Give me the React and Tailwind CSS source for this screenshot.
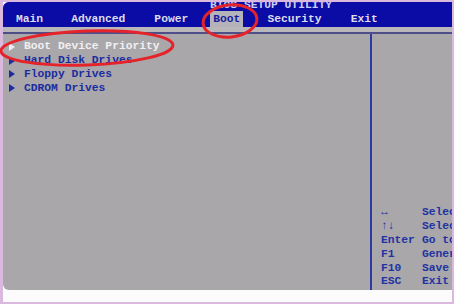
import React from "react";

const mono = { fontFamily: '"Liberation Mono", "DejaVu Sans Mono", monospace' };

function Tri({ color }) {
  return (
    <svg width="6" height="8" viewBox="0 0 6 8" className="shrink-0">
      <polygon points="0,0 6,4 0,8" fill={color} />
    </svg>
  );
}

export default function App() {
  const items = [
    { t: "Boot Device Priority", sel: true },
    { t: "Hard Disk Drives" },
    { t: "Floppy Drives" },
    { t: "CDROM Drives" },
  ];
  const help = [
    ["↔", "Select Screen"],
    ["↑↓", "Select Item"],
    ["Enter", "Go to Sub Screen"],
    ["F1", "General Help"],
    ["F10", "Save and Exit"],
    ["ESC", "Exit"],
  ];
  return (
    <div
      className="relative w-[454px] h-[304px] bg-[#dbb8de] pl-[3px] pr-[2px] pt-[2px] pb-[2px] overflow-hidden font-bold text-[11.3px]"
      style={mono}
    >
      <div className="flex flex-col h-full bg-[#fbfbfb]">
        <div className="flex-1 flex flex-col rounded-tl-[6px] rounded-bl-[6px] overflow-hidden bg-[#a9a7a9]">
          <div className="bg-[#0b0ba6] h-[25px] flex flex-col">
            <div className="h-[8px] overflow-hidden flex items-end pl-[207px]">
              <span className="text-[#c9cdf5] leading-[10px] whitespace-pre">BIOS SETUP UTILITY</span>
            </div>
            <div className="flex-1 flex items-end text-[#dcdcea] leading-[17px]">
              <span className="ml-[13px] h-[16px]">Main</span>
              <span className="ml-[28px] h-[16px]">Advanced</span>
              <span className="ml-[29px] h-[16px]">Power</span>
              <span className="ml-[22px] h-[16px] px-[3px] bg-[#b4b3ba] text-[#1a1a9c]">Boot</span>
              <span className="ml-[24px] h-[16px]">Security</span>
              <span className="ml-[29px] h-[16px]">Exit</span>
            </div>
          </div>
          <div className="h-[5px] bg-[#b9b7ba]" />
          <div className="h-[2px] bg-[#4e4e88]" />
          <div className="flex-1 flex min-h-0">
            <div className="w-[367px] pt-[6px] flex flex-col">
              {items.map((it) => (
                <div key={it.t} className="flex items-center h-[13.8px] pl-[6px]">
                  <Tri color={it.sel ? "#ececf0" : "#1c2ca0"} />
                  <span
                    className={`ml-[9px] whitespace-pre ${it.sel ? "text-[#f0f0f2]" : "text-[#1c2ca0]"}`}
                  >
                    {it.t}
                  </span>
                </div>
              ))}
            </div>
            <div className="w-[2px] bg-[#2c3aa6]" />
            <div className="flex-1 overflow-hidden pt-[172px] pl-[9px] text-[#2232a2]">
              {help.map(([k, d]) => (
                <div key={k} className="flex h-[13.8px] items-center whitespace-pre">
                  <span className="w-[41px] shrink-0">{k}</span>
                  <span>{d}</span>
                </div>
              ))}
            </div>
          </div>
        </div>
        <div className="h-[12px]" />
      </div>
      <svg className="absolute inset-0 pointer-events-none" width="454" height="304">
        <ellipse cx="87" cy="48" rx="86" ry="17" fill="none" stroke="#e4232b" strokeWidth="3" transform="rotate(-2 87 48)" />
        <ellipse cx="230" cy="21" rx="27" ry="16" fill="none" stroke="#e4232b" strokeWidth="3" transform="rotate(-6 230 21)" />
      </svg>
    </div>
  );
}
